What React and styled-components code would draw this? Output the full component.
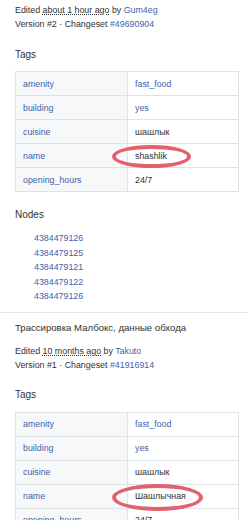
import React from 'react';
import styled, { createGlobalStyle } from 'styled-components';

const Global = createGlobalStyle`
  html, body { margin: 0; padding: 0; background: #fff; overflow: hidden; }
  body { font-family: "Liberation Sans", Arial, sans-serif; color: #2f3235; }
  * { box-sizing: border-box; }
`;

const Page = styled.div`
  width: 248px;
  display: flex;
  flex-direction: column;
`;

const Section = styled.section`
  display: flex;
  flex-direction: column;
  padding: ${p => p.$top}px 9px 8.5px 15px;
  border-top: ${p => (p.$divided ? '1px solid #e3e5e8' : 'none')};
`;

const Title = styled.p`
  margin: 0;
  font-size: 9.6px;
  line-height: 14px;
`;

const Meta = styled.div`
  margin-top: ${p => p.$gap || 0}px;
  font-size: 8.85px;
  line-height: 14px;
`;

const Line = styled.div`
  white-space: nowrap;
`;

const Link = styled.a`
  color: #3f62ab;
  text-decoration: none;
`;

const Abbr = styled.abbr`
  text-decoration: underline dotted;
  text-underline-offset: 1px;
`;

const Heading = styled.h4`
  margin: ${p => p.$gap}px 0 0;
  font-size: 10px;
  font-weight: 400;
  line-height: 14px;
`;

const Table = styled.div`
  margin-top: 9.5px;
  width: 224px;
  border: 1px solid #dfe2e6;
  border-bottom: none;
  display: flex;
  flex-direction: column;
  font-size: 8.85px;
`;

const Row = styled.div`
  display: grid;
  grid-template-columns: 112px 1fr;
  height: 24px;
  border-bottom: 1px solid #dfe2e6;
`;

const Cell = styled.div`
  display: flex;
  align-items: center;
  padding: 0 7px;
  line-height: 14px;
  white-space: nowrap;
  background: ${p => (p.$key ? '#f7f8fa' : '#fff')};
  border-right: ${p => (p.$key ? '1px solid #dfe2e6' : 'none')};
  color: #2f3235;
`;

const Marked = styled.span`
  position: relative;
  display: inline-block;
`;

const Ring = styled.span`
  position: absolute;
  top: ${p => p.$t}px;
  bottom: ${p => p.$b}px;
  left: ${p => p.$l}px;
  right: ${p => p.$r}px;
  border: 4.5px solid #e3606d;
  border-radius: 50%;
  pointer-events: none;
`;

const NodeList = styled.ul`
  margin: 9px 0 0;
  padding: 0 0 0 19px;
  list-style: none;
  font-size: 8.85px;
  line-height: 14.5px;
`;

const TagTable = ({ tags }) => (
  <Table>
    {tags.map(t => (
      <Row key={t.k}>
        <Cell $key>
          <Link href="#">{t.k}</Link>
        </Cell>
        <Cell>
          {t.ring ? (
            <Marked>
              {t.v}
              <Ring $t={t.ring[0]} $r={t.ring[1]} $b={t.ring[2]} $l={t.ring[3]} />
            </Marked>
          ) : t.link ? (
            <Link href="#">{t.v}</Link>
          ) : (
            t.v
          )}
        </Cell>
      </Row>
    ))}
  </Table>
);

const tags1 = [
  { k: 'amenity', v: 'fast_food', link: true },
  { k: 'building', v: 'yes', link: true },
  { k: 'cuisine', v: 'шашлык' },
  { k: 'name', v: 'shashlik', ring: [-3.5, -24, -5, -23.5] },
  { k: 'opening_hours', v: '24/7' },
];

const tags2 = [
  { k: 'amenity', v: 'fast_food', link: true },
  { k: 'building', v: 'yes', link: true },
  { k: 'cuisine', v: 'шашлык' },
  { k: 'name', v: 'Шашлычная', ring: [-5, -17, -8, -23.5] },
  { k: 'opening_hours', v: '24/7' },
];

const nodes = ['4384479126', '4384479125', '4384479121', '4384479122', '4384479126'];

export default function App() {
  return (
    <Page>
      <Global />
      <Section $top={3}>
        <Meta>
          <Line>
            Edited <Abbr title="">about 1 hour ago</Abbr> by <Link href="#">Gum4eg</Link>
          </Line>
          <Line>
            Version #2 · Changeset <Link href="#">#49690904</Link>
          </Line>
        </Meta>
        <Heading $gap={16.5}>Tags</Heading>
        <TagTable tags={tags1} />
        <Heading $gap={16}>Nodes</Heading>
        <NodeList>
          {nodes.map((n, i) => (
            <li key={i}>
              <Link href="#">{n}</Link>
            </li>
          ))}
        </NodeList>
      </Section>
      <Section $top={7.7} $divided>
        <Title>Трассировка Малбокс, данные обхода</Title>
        <Meta $gap={9.3}>
          <Line>
            Edited <Abbr title="">10 months ago</Abbr> by <Link href="#">Takuto</Link>
          </Line>
          <Line>
            Version #1 · Changeset <Link href="#">#41916914</Link>
          </Line>
        </Meta>
        <Heading $gap={16.5}>Tags</Heading>
        <TagTable tags={tags2} />
      </Section>
    </Page>
  );
}
